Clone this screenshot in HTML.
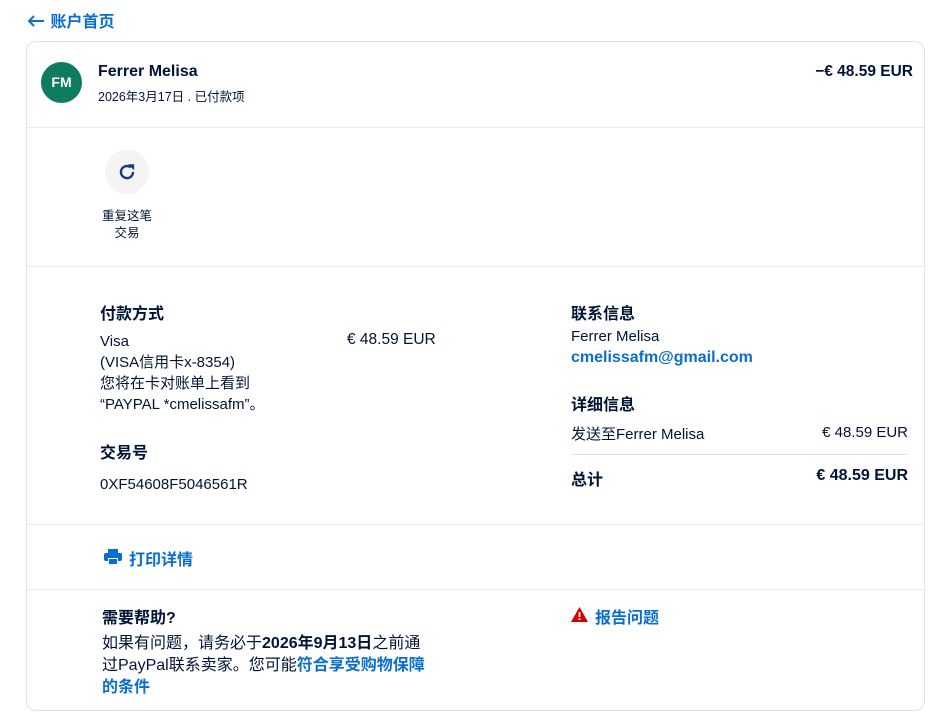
<!DOCTYPE html>
<html><head><meta charset="utf-8"><style>
body{margin:0;width:950px;height:718px;background:#fff;font-family:"Liberation Sans","Noto Sans CJK SC",sans-serif;color:#001435;position:relative;overflow:hidden}
.a{position:absolute;white-space:nowrap}
.b{color:#0a6ed1}
.card{position:absolute;left:26px;top:41px;width:897px;height:668px;border:1px solid #e3e3e3;border-radius:10px}
.hr{position:absolute;left:27px;width:897px;height:1px;background:#ebebeb}
.f15{font-size:16px}.f14{font-size:15px}.f12{font-size:12.5px}
.bold{font-weight:bold}
</style></head><body>
<div class="a b" style="left:26px;top:8px;font-size:16px;font-weight:bold">
<svg width="20" height="14" viewBox="0 0 20 14" style="vertical-align:-1px"><path d="M18 7H3M8 2L3 7l5 5" stroke="#0a6ed1" stroke-width="2" fill="none"/></svg> 账户首页</div>
<div class="card"></div>
<div class="a" style="left:41px;top:62px;width:41px;height:41px;border-radius:50%;background:#0f7c61;color:#fff;font-weight:bold;font-size:14px;line-height:41px;text-align:center">FM</div>
<div class="a bold" style="left:98px;top:63px;font-size:16px">Ferrer Melisa</div>
<div class="a f12" style="left:98px;top:86px">2026年3月17日 . 已付款项</div>
<div class="a bold" style="right:37px;top:63px;font-size:15.5px">−€ 48.59 EUR</div>
<div class="hr" style="top:127px"></div>
<div class="a" style="left:105px;top:150px;width:44px;height:44px;border-radius:50%;background:#f5f4f2"></div>
<svg class="a" style="left:116px;top:161px" width="22" height="22" viewBox="0 0 20 20"><path d="M15.5 10A5.5 5.5 0 1 1 13.5 5.8" stroke="#1a3b8c" stroke-width="2.2" fill="none"/><path d="M11 3h5.5v5.5z" fill="#1a3b8c"/></svg>
<div class="a f12" style="left:96px;top:208px;width:62px;text-align:center;line-height:17px;white-space:normal">重复这笔<br>交易</div>
<div class="hr" style="top:266px"></div>
<div class="a bold f15" style="left:100px;top:300px">付款方式</div>
<div class="a f14" style="left:100px;top:331px;line-height:21px">Visa<br>(VISA信用卡x-8354)<br>您将在卡对账单上看到<br>“PAYPAL *cmelissafm”。</div>
<div class="a" style="left:347px;top:331px;font-size:15.5px">€ 48.59 EUR</div>
<div class="a bold f15" style="left:100px;top:439px">交易号</div>
<div class="a f14" style="left:100px;top:476px">0XF54608F5046561R</div>
<div class="a bold f15" style="left:571px;top:300px">联系信息</div>
<div class="a f14" style="left:571px;top:328px">Ferrer Melisa</div>
<div class="a bold b" style="left:571px;top:349px;font-size:16px">cmelissafm@gmail.com</div>
<div class="a bold f15" style="left:571px;top:391px">详细信息</div>
<div class="a f14" style="left:571px;top:423px">发送至Ferrer Melisa</div>
<div class="a f14" style="right:42px;top:424px">€ 48.59 EUR</div>
<div class="a" style="left:571px;top:454px;width:337px;height:1px;background:#e3e3e3"></div>
<div class="a bold f15" style="left:571px;top:466px">总计</div>
<div class="a bold f15" style="right:42px;top:467px">€ 48.59 EUR</div>
<div class="hr" style="top:524px"></div>
<svg class="a" style="left:104px;top:549px" width="18" height="16" viewBox="0 0 18 16"><rect x="4" y="0" width="10" height="4" fill="#0a6ed1"/><rect x="0" y="4" width="18" height="8" rx="2" fill="#0a6ed1"/><rect x="4" y="9" width="10" height="7" fill="#fff"/><rect x="5" y="10" width="8" height="5" fill="#0a6ed1"/></svg>
<div class="a b bold" style="left:129px;top:546px;font-size:16px">打印详情</div>
<div class="hr" style="top:589px"></div>
<div class="a bold f15" style="left:102px;top:604px">需要帮助?</div>
<div class="a" style="left:102px;top:633px;line-height:22px;font-size:16px">如果有问题，请务必于<b>2026年9月13日</b>之前通<br>过PayPal联系卖家。您可能<b class="b">符合享受购物保障</b><br><b class="b">的条件</b></div>
<svg class="a" style="left:571px;top:607px" width="17" height="15" viewBox="0 0 17 15"><path d="M8.5 0L17 15H0z" fill="#d20000"/><rect x="7.6" y="5" width="1.8" height="5" fill="#fff"/><rect x="7.6" y="11.2" width="1.8" height="1.8" fill="#fff"/></svg>
<div class="a b bold" style="left:595px;top:604px;font-size:16px">报告问题</div>
</body></html>
